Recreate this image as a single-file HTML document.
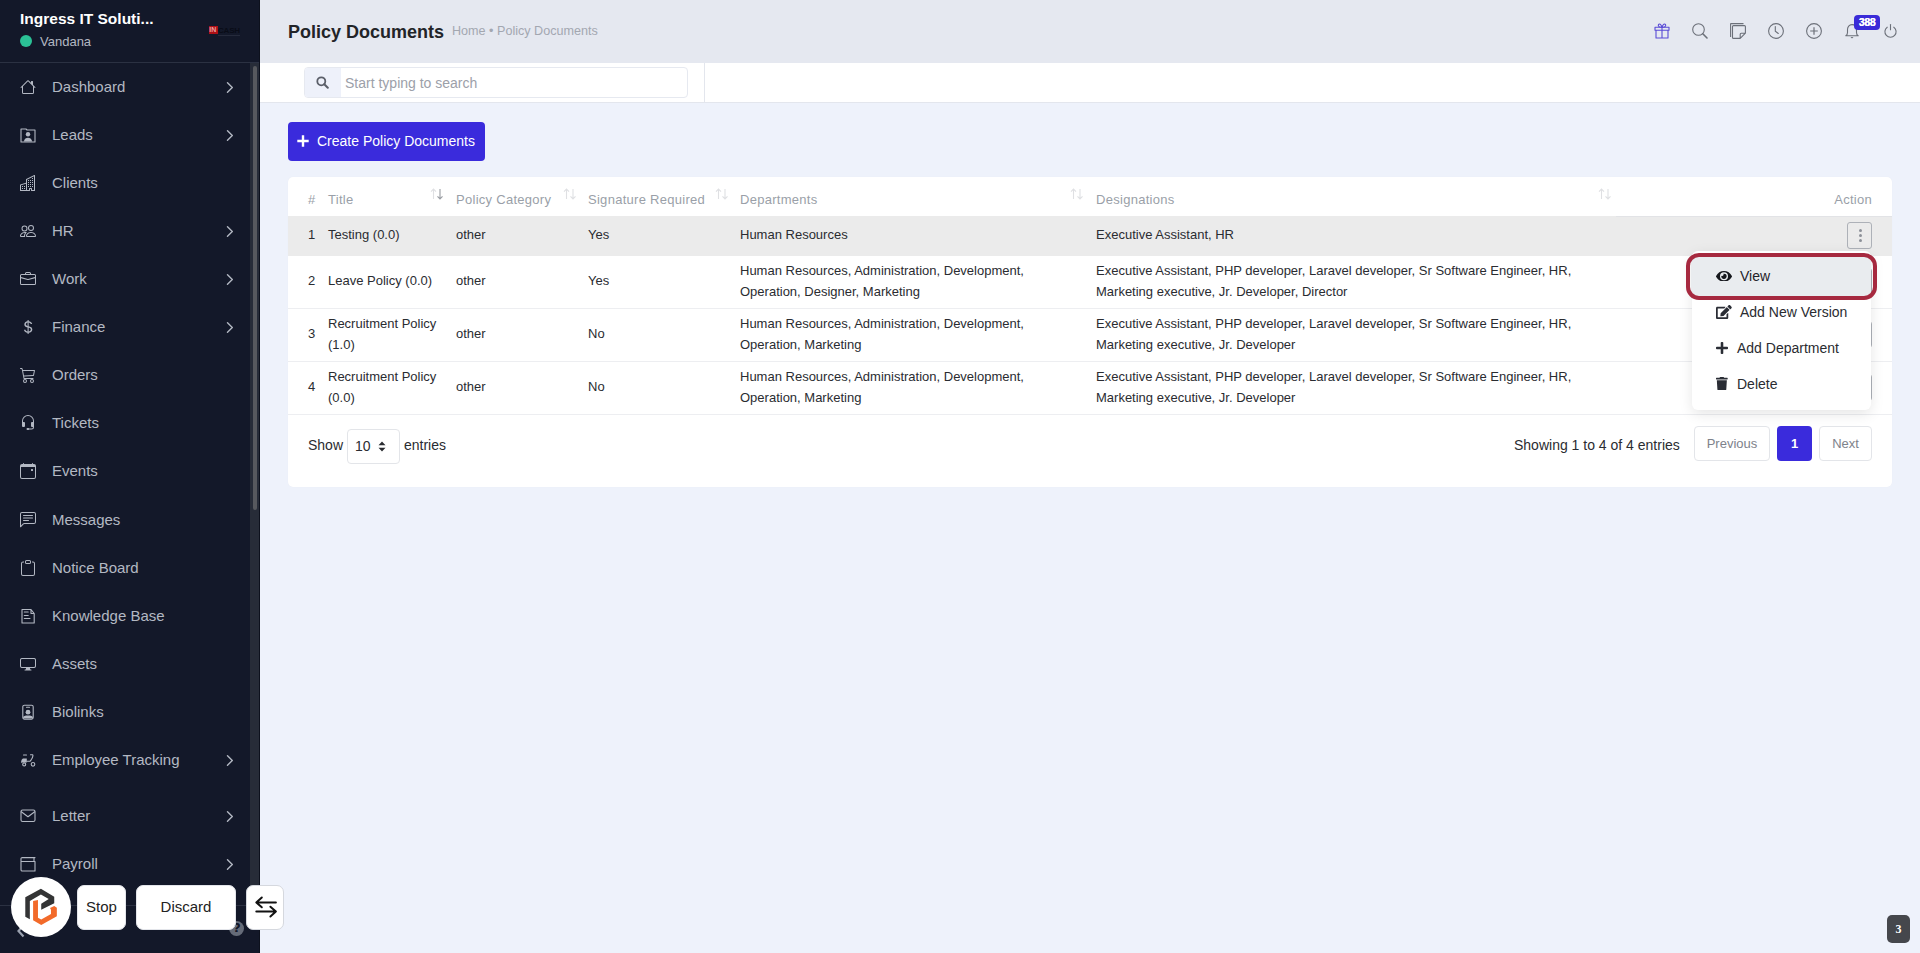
<!DOCTYPE html>
<html><head><meta charset="utf-8">
<style>
*{box-sizing:border-box;margin:0;padding:0}
html,body{width:1920px;height:953px;overflow:hidden;font-family:"Liberation Sans",sans-serif;background:#EEF2FB;position:relative}
.a{position:absolute;white-space:nowrap}
#sb{position:absolute;left:0;top:0;width:260px;height:953px;background:#131829;border-right:1px solid #0D111D}
#sbh{position:absolute;left:0;top:0;width:259px;height:63px;border-bottom:1px solid #2B3142}
.co{position:absolute;left:20px;top:9px;color:#fff;font-weight:bold;font-size:15.5px;line-height:20px;white-space:nowrap}
.usr{position:absolute;left:40px;top:33px;color:#B3B8C3;font-size:13px;line-height:18px}
.dot{position:absolute;left:20px;top:34.5px;width:12px;height:12px;border-radius:50%;background:#2BC196}
.nav{position:absolute;left:0;width:250px;height:40px}
.nav .ic{position:absolute;left:20px;top:12px;width:16px;height:16px;overflow:visible}
.nav .t{position:absolute;left:52px;top:10px;font-size:15px;line-height:20px;color:#B3B8C3;white-space:nowrap}
.nav .ch{position:absolute;left:226px;top:14.5px}
#scr{position:absolute;left:250px;top:63px;width:9px;height:842px;background:#272C38}
#thumb{position:absolute;left:253px;top:66px;width:4px;height:444px;background:#57595E;border-radius:2px}
#sbf{position:absolute;left:0;top:905px;width:259px;height:1px;background:#2B3142}
#hdr{position:absolute;left:260px;top:0;width:1660px;height:63px;background:#E5E8F0}
#srow{position:absolute;left:260px;top:63px;width:1660px;height:40px;background:#fff;border-bottom:1px solid #E3E6ED}
.h1{position:absolute;left:288px;top:21px;font-size:18px;line-height:22px;font-weight:bold;color:#222428;white-space:nowrap}
.bc{position:absolute;left:452px;top:23px;font-size:12.6px;line-height:16px;color:#A3A7B0;white-space:nowrap}
.hic{position:absolute;top:22px;width:17px;height:17px}
.badge{position:absolute;left:1854px;top:15px;width:26px;height:15px;border-radius:4px;background:#3A2BD8;color:#fff;font-size:10.5px;font-weight:bold;line-height:15px;text-align:center;letter-spacing:-0.3px;text-shadow:0.35px 0 0 #fff}
.sbox{position:absolute;left:304px;top:67px;width:384px;height:31px;border:1px solid #E6E9F0;border-radius:4px;background:#fff;overflow:hidden}
.sico{position:absolute;left:0;top:0;width:36px;height:29px;background:#EEF1FA}
.sph{position:absolute;left:40px;top:7px;font-size:14px;line-height:16px;color:#9CA0A9;white-space:nowrap}
#vdiv{position:absolute;left:704px;top:63px;width:1px;height:39px;background:#E3E6ED}
.btn{position:absolute;left:288px;top:122px;width:197px;height:39px;background:#3A2BDC;border-radius:4px;color:#fff}
.btn .t{position:absolute;left:29px;top:11px;font-size:14px;line-height:17px;white-space:nowrap}
.card{position:absolute;left:288px;top:177px;width:1604px;height:310px;background:#fff;border-radius:5px;box-shadow:0 0 1px rgba(0,0,0,.05)}
.th{position:absolute;top:15px;font-size:13px;line-height:16px;color:#9A9FA8;white-space:nowrap;letter-spacing:0.28px}
.td{position:absolute;font-size:13px;line-height:21px;color:#2A2C31;white-space:nowrap}
.row1{position:absolute;left:0;top:39px;width:1604px;height:40px;background:#EBEBEB}
.rb{position:absolute;left:0;width:1604px;height:1px;background:#EDEEF1}
.sort{position:absolute;top:12px;width:14px;height:14px}
</style></head><body>
<div id="sb">
  <div id="sbh">
    <div class="co">Ingress IT Soluti...</div>
    <div class="dot"></div>
    <div class="usr">Vandana</div>
    <div class="a" style="left:208.5px;top:25.7px;width:9px;height:8.3px;background:#AD1016"></div>
    <div class="a" style="left:209.3px;top:26px;font-size:7px;line-height:8px;font-weight:bold;color:#E9A0A0">IN</div>
    <div class="a" style="left:218px;top:26.5px;font-size:8px;line-height:8px;font-weight:bold;color:#090C17;letter-spacing:-0.2px">CASH</div>
    <div class="a" style="left:218px;top:34.5px;width:22px;height:1.2px;background:#252A3B"></div>
  </div>
<div class="nav" style="top:66.5px"><svg class="ic" viewBox="0 0 16 16" width="16" height="16"><path fill="#B3B8C3" d="M8.707 1.5a1 1 0 0 0-1.414 0L.646 8.146a.5.5 0 0 0 .708.708L2 8.207V13.5A1.5 1.5 0 0 0 3.5 15h9a1.5 1.5 0 0 0 1.5-1.5V8.207l.646.647a.5.5 0 0 0 .708-.708L13 5.793V2.5a.5.5 0 0 0-.5-.5h-1a.5.5 0 0 0-.5.5v1.293L8.707 1.5ZM13 7.207V13.5a.5.5 0 0 1-.5.5h-9a.5.5 0 0 1-.5-.5V7.207l5-5 5 5Z"/></svg><div class="t">Dashboard</div><svg class="ch" viewBox="0 0 8 12" width="8" height="12"><path d="M1.5 1.8 L6.3 6.5 L1.5 11.2" fill="none" stroke="#B3B8C3" stroke-width="1.4" stroke-linecap="round" stroke-linejoin="round"/></svg></div>
<div class="nav" style="top:114.5px"><svg class="ic" viewBox="0 0 16 16" width="16" height="16"><path fill="none" stroke="#B3B8C3" stroke-width="1.1" stroke-linecap="round" stroke-linejoin="round" d="M1 2 H6 L7 3 H15 V15 H1 Z"/><circle cx="8" cy="7.3" r="2.2" fill="#B3B8C3"/><path fill="#B3B8C3" d="M3.8 14.6 C4.5 11.5 6 10.8 8 10.8 C10 10.8 11.5 11.5 12.2 14.6 Z"/></svg><div class="t">Leads</div><svg class="ch" viewBox="0 0 8 12" width="8" height="12"><path d="M1.5 1.8 L6.3 6.5 L1.5 11.2" fill="none" stroke="#B3B8C3" stroke-width="1.4" stroke-linecap="round" stroke-linejoin="round"/></svg></div>
<div class="nav" style="top:162.5px"><svg class="ic" viewBox="0 0 16 16" width="16" height="16"><path fill="#B3B8C3" d="M14.763.075A.5.5 0 0 1 15 .5v15a.5.5 0 0 1-.5.5h-3a.5.5 0 0 1-.5-.5V14h-1v1.5a.5.5 0 0 1-.5.5h-9a.5.5 0 0 1-.5-.5V10a.5.5 0 0 1 .342-.474L6 7.64V4.5a.5.5 0 0 1 .276-.447l8-4a.5.5 0 0 1 .487.022ZM6 8.694 1 10.36V15h5V8.694ZM7 15h2v-1.5a.5.5 0 0 1 .5-.5h2a.5.5 0 0 1 .5.5V15h2V1.309l-7 3.5V15Z M2 11h1v1H2v-1Zm2 0h1v1H4v-1Zm-2 2h1v1H2v-1Zm2 0h1v1H4v-1Zm4-4h1v1H8V9Zm2 0h1v1h-1V9Zm-2 2h1v1H8v-1Zm2 0h1v1h-1v-1Zm2-2h1v1h-1V9Zm0 2h1v1h-1v-1ZM8 7h1v1H8V7Zm2 0h1v1h-1V7Zm2 0h1v1h-1V7ZM8 5h1v1H8V5Zm2 0h1v1h-1V5Zm2 0h1v1h-1V5Zm0-2h1v1h-1V3Z"/></svg><div class="t">Clients</div></div>
<div class="nav" style="top:210.5px"><svg class="ic" viewBox="0 0 16 16" width="16" height="16"><path fill="#B3B8C3" d="M15 14s1 0 1-1-1-4-5-4-5 3-5 4 1 1 1 1h8Zm-7.978-1A.261.261 0 0 1 7 12.996c.001-.264.167-1.03.76-1.72C8.312 10.629 9.282 10 11 10c1.717 0 2.687.63 3.240 1.276.593.69.758 1.457.76 1.72l-.008.002a.274.274 0 0 1-.014.002H7.022ZM11 7a2 2 0 1 0 0-4 2 2 0 0 0 0 4Zm3-2a3 3 0 1 1-6 0 3 3 0 0 1 6 0ZM6.936 9.28a5.88 5.88 0 0 0-1.23-.247A7.35 7.35 0 0 0 5 9c-4 0-5 3-5 4 0 .667.333 1 1 1h4.216A2.238 2.238 0 0 1 5 13c0-1.01.377-2.042 1.090-2.904.243-.294.526-.569.846-.816ZM4.92 10A5.493 5.493 0 0 0 4 13H1c0-.26.164-1.03.76-1.724.545-.636 1.492-1.256 3.160-1.275ZM1.5 5.5a3 3 0 1 1 6 0 3 3 0 0 1-6 0Zm3-2a2 2 0 1 0 0 4 2 2 0 0 0 0-4Z"/></svg><div class="t">HR</div><svg class="ch" viewBox="0 0 8 12" width="8" height="12"><path d="M1.5 1.8 L6.3 6.5 L1.5 11.2" fill="none" stroke="#B3B8C3" stroke-width="1.4" stroke-linecap="round" stroke-linejoin="round"/></svg></div>
<div class="nav" style="top:258.5px"><svg class="ic" viewBox="0 0 16 16" width="16" height="16"><path fill="#B3B8C3" d="M6.5 1A1.5 1.5 0 0 0 5 2.5V3H1.5A1.5 1.5 0 0 0 0 4.5v8A1.5 1.5 0 0 0 1.5 14h13a1.5 1.5 0 0 0 1.5-1.5v-8A1.5 1.5 0 0 0 14.5 3H11v-.5A1.5 1.5 0 0 0 9.5 1h-3zm0 1h3a.5.5 0 0 1 .5.5V3H6v-.5a.5.5 0 0 1 .5-.5zm1.886 6.914L15 7.151V12.5a.5.5 0 0 1-.5.5h-13a.5.5 0 0 1-.5-.5V7.15l6.614 1.764a1.5 1.5 0 0 0 .772 0zM1.5 4h13a.5.5 0 0 1 .5.5v1.616L8.129 7.948a.5.5 0 0 1-.258 0L1 6.116V4.5a.5.5 0 0 1 .5-.5z"/></svg><div class="t">Work</div><svg class="ch" viewBox="0 0 8 12" width="8" height="12"><path d="M1.5 1.8 L6.3 6.5 L1.5 11.2" fill="none" stroke="#B3B8C3" stroke-width="1.4" stroke-linecap="round" stroke-linejoin="round"/></svg></div>
<div class="nav" style="top:306.5px"><svg class="ic" viewBox="0 0 16 16" width="16" height="16"><path fill="#B3B8C3" d="M4 10.781c.148 1.667 1.513 2.85 3.591 3.003V15h1.043v-1.216c2.27-.179 3.678-1.438 3.678-3.3 0-1.59-.947-2.51-2.956-3.028l-.722-.187V3.467c1.122.11 1.879.714 2.07 1.616h1.47c-.166-1.6-1.54-2.748-3.54-2.875V1H7.591v1.233c-1.939.23-3.27 1.472-3.27 3.156 0 1.454.966 2.483 2.661 2.917l.61.162v4.031c-1.149-.17-1.94-.8-2.131-1.718H4zm3.391-3.836c-1.043-.263-1.6-.825-1.6-1.616 0-.944.704-1.641 1.8-1.828v3.495l-.2-.05zm1.591 1.872c1.287.323 1.852.859 1.852 1.769 0 1.097-.826 1.828-2.2 1.939V8.73l.348.086z"/></svg><div class="t">Finance</div><svg class="ch" viewBox="0 0 8 12" width="8" height="12"><path d="M1.5 1.8 L6.3 6.5 L1.5 11.2" fill="none" stroke="#B3B8C3" stroke-width="1.4" stroke-linecap="round" stroke-linejoin="round"/></svg></div>
<div class="nav" style="top:354.5px"><svg class="ic" viewBox="0 0 16 16" width="16" height="16"><path fill="#B3B8C3" d="M0 1.5A.5.5 0 0 1 .5 1H2a.5.5 0 0 1 .485.379L2.89 3H14.5a.5.5 0 0 1 .49.598l-1 5a.5.5 0 0 1-.465.401l-9.397.472L4.415 11H13a.5.5 0 0 1 0 1H4a.5.5 0 0 1-.491-.408L2.010 3.607 1.610 2H.5a.5.5 0 0 1-.5-.5zM3.102 4l.84 4.479 9.144-.459L13.890 4H3.102zM5 12a2 2 0 1 0 0 4 2 2 0 0 0 0-4zm7 0a2 2 0 1 0 0 4 2 2 0 0 0 0-4zm-7 1a1 1 0 1 1 0 2 1 1 0 0 1 0-2zm7 0a1 1 0 1 1 0 2 1 1 0 0 1 0-2z"/></svg><div class="t">Orders</div></div>
<div class="nav" style="top:402.5px"><svg class="ic" viewBox="0 0 16 16" width="16" height="16"><path fill="#B3B8C3" d="M8 1a5 5 0 0 0-5 5v1h1a1 1 0 0 1 1 1v3a1 1 0 0 1-1 1H3a1 1 0 0 1-1-1V6a6 6 0 1 1 12 0v6a2.5 2.5 0 0 1-2.5 2.5H9.366a1 1 0 0 1-.866.5h-1a1 1 0 1 1 0-2h1a1 1 0 0 1 .866.5H11.5A1.5 1.5 0 0 0 13 12h-1a1 1 0 0 1-1-1V8a1 1 0 0 1 1-1h1V6a5 5 0 0 0-5-5z"/></svg><div class="t">Tickets</div></div>
<div class="nav" style="top:450.5px"><svg class="ic" viewBox="0 0 16 16" width="16" height="16"><path fill="#B3B8C3" d="M11 6.5a.5.5 0 0 1 .5-.5h1a.5.5 0 0 1 .5.5v1a.5.5 0 0 1-.5.5h-1a.5.5 0 0 1-.5-.5v-1z M3.5 0a.5.5 0 0 1 .5.5V1h8V.5a.5.5 0 0 1 1 0V1h1a2 2 0 0 1 2 2v11a2 2 0 0 1-2 2H2a2 2 0 0 1-2-2V3a2 2 0 0 1 2-2h1V.5a.5.5 0 0 1 .5-.5zM1 4v10a1 1 0 0 0 1 1h12a1 1 0 0 0 1-1V4H1z"/></svg><div class="t">Events</div></div>
<div class="nav" style="top:499.5px"><svg class="ic" viewBox="0 0 16 16" width="16" height="16"><path fill="#B3B8C3" d="M14 1a1 1 0 0 1 1 1v8a1 1 0 0 1-1 1H4.414A2 2 0 0 0 3 11.586l-2 2V2a1 1 0 0 1 1-1h12zM2 0a2 2 0 0 0-2 2v12.793a.5.5 0 0 0 .854.353l2.853-2.853A1 1 0 0 1 4.414 12H14a2 2 0 0 0 2-2V2a2 2 0 0 0-2-2H2z M3 3.5a.5.5 0 0 1 .5-.5h9a.5.5 0 0 1 0 1h-9a.5.5 0 0 1-.5-.5zM3 6a.5.5 0 0 1 .5-.5h9a.5.5 0 0 1 0 1h-9A.5.5 0 0 1 3 6zm0 2.5a.5.5 0 0 1 .5-.5h5a.5.5 0 0 1 0 1h-5a.5.5 0 0 1-.5-.5z"/></svg><div class="t">Messages</div></div>
<div class="nav" style="top:547.5px"><svg class="ic" viewBox="0 0 16 16" width="16" height="16"><path fill="#B3B8C3" d="M4 1.5H3a2 2 0 0 0-2 2V14a2 2 0 0 0 2 2h10a2 2 0 0 0 2-2V3.5a2 2 0 0 0-2-2h-1v1h1a1 1 0 0 1 1 1V14a1 1 0 0 1-1 1H3a1 1 0 0 1-1-1V3.5a1 1 0 0 1 1-1h1v-1z M9.5 1a.5.5 0 0 1 .5.5v1a.5.5 0 0 1-.5.5h-3a.5.5 0 0 1-.5-.5v-1a.5.5 0 0 1 .5-.5h3zm-3-1A1.5 1.5 0 0 0 5 1.5v1A1.5 1.5 0 0 0 6.5 4h3A1.5 1.5 0 0 0 11 2.5v-1A1.5 1.5 0 0 0 9.5 0h-3z"/></svg><div class="t">Notice Board</div></div>
<div class="nav" style="top:595.5px"><svg class="ic" viewBox="0 0 16 16" width="16" height="16"><path fill="none" stroke="#B3B8C3" stroke-width="1.1" stroke-linecap="round" stroke-linejoin="round" d="M2 1.5 H11 L14.2 5.5 V15 H2 Z M11 1.5 V5.5 H14.2"/><path fill="none" stroke="#B3B8C3" stroke-width="1.1" stroke-linecap="round" stroke-linejoin="round" d="M4.3 4 H8.2 M4.3 7.5 H8.2 M4.3 10.5 H10"/></svg><div class="t">Knowledge Base</div></div>
<div class="nav" style="top:643.5px"><svg class="ic" viewBox="0 0 16 16" width="16" height="16"><path fill="#B3B8C3" d="M0 4s0-2 2-2h12s2 0 2 2v6s0 2-2 2h-4c0 .667.083 1.167.25 1.5H11a.5.5 0 0 1 0 1H5a.5.5 0 0 1 0-1h.75c.167-.333.25-.833.25-1.5H2s-2 0-2-2V4zm1.398-.855a.758.758 0 0 0-.254.302A1.46 1.46 0 0 0 1 4.010V10c0 .325.078.502.145.602.07.105.17.188.302.254a1.464 1.464 0 0 0 .538.143L2.010 11H14c.325 0 .502-.078.602-.145a.758.758 0 0 0 .254-.302 1.464 1.464 0 0 0 .143-.538L15 9.990V4c0-.325-.078-.502-.145-.602a.757.757 0 0 0-.302-.254A1.46 1.46 0 0 0 13.990 3H2c-.325 0-.502.078-.602.145z"/></svg><div class="t">Assets</div></div>
<div class="nav" style="top:691.5px"><svg class="ic" viewBox="0 0 16 16" width="16" height="16"><rect x="2.8" y="1.2" width="10.4" height="14" rx="1.6" fill="none" stroke="#B3B8C3" stroke-width="1.1" stroke-linecap="round" stroke-linejoin="round"/><path fill="none" stroke="#B3B8C3" stroke-width="1.1" stroke-linecap="round" stroke-linejoin="round" d="M6.5 3.2 H9.5"/><circle cx="8" cy="8.2" r="2.4" fill="#B3B8C3"/><path fill="#B3B8C3" d="M3.2 14.4 V13.2 C3.2 12 5 11.5 8 11.5 C11 11.5 12.8 12 12.8 13.2 V14.4 Z"/></svg><div class="t">Biolinks</div></div>
<div class="nav" style="top:739.5px"><svg class="ic" viewBox="0 0 16 16" width="16" height="16"><path fill="none" stroke="#B3B8C3" stroke-width="1.1" stroke-linecap="round" stroke-linejoin="round" d="M3.5 3 H6.5 M10.5 2.8 H12.6 C13.2 2.8 13 5 11.5 7.3 L10 9.3 H7"/><path fill="#B3B8C3" d="M1 11 C1 8.5 2.2 6.7 3 6.6 H6.8 V10.4 H2 Z"/><circle cx="4.2" cy="12.4" r="1.5" fill="none" stroke="#B3B8C3" stroke-width="1.1" stroke-linecap="round" stroke-linejoin="round"/><circle cx="13" cy="12.3" r="1.8" fill="none" stroke="#B3B8C3" stroke-width="1.1" stroke-linecap="round" stroke-linejoin="round"/></svg><div class="t">Employee Tracking</div><svg class="ch" viewBox="0 0 8 12" width="8" height="12"><path d="M1.5 1.8 L6.3 6.5 L1.5 11.2" fill="none" stroke="#B3B8C3" stroke-width="1.4" stroke-linecap="round" stroke-linejoin="round"/></svg></div>
<div class="nav" style="top:795.5px"><svg class="ic" viewBox="0 0 16 16" width="16" height="16"><rect x="1" y="2" width="14" height="11.5" rx="1.6" fill="none" stroke="#B3B8C3" stroke-width="1.1" stroke-linecap="round" stroke-linejoin="round"/><path fill="none" stroke="#B3B8C3" stroke-width="1.1" stroke-linecap="round" stroke-linejoin="round" d="M1.3 3.8 L8 8.8 L14.7 3.8"/></svg><div class="t">Letter</div><svg class="ch" viewBox="0 0 8 12" width="8" height="12"><path d="M1.5 1.8 L6.3 6.5 L1.5 11.2" fill="none" stroke="#B3B8C3" stroke-width="1.4" stroke-linecap="round" stroke-linejoin="round"/></svg></div>
<div class="nav" style="top:843.5px"><svg class="ic" viewBox="0 0 16 16" width="16" height="16"><path fill="none" stroke="#B3B8C3" stroke-width="1.1" stroke-linecap="round" stroke-linejoin="round" d="M2.3 1.6 H15 M1 5.5 H15 V15 H2.2 A1.2 1.2 0 0 1 1 13.8 V2.8 A1.2 1.2 0 0 1 2.3 1.6 M14 1.6 V5.5"/></svg><div class="t">Payroll</div><svg class="ch" viewBox="0 0 8 12" width="8" height="12"><path d="M1.5 1.8 L6.3 6.5 L1.5 11.2" fill="none" stroke="#B3B8C3" stroke-width="1.4" stroke-linecap="round" stroke-linejoin="round"/></svg></div>
  <div id="scr"></div><div id="thumb"></div>
  <div id="sbf"></div>
</div>
<div id="hdr">
</div>
<div class="h1">Policy Documents</div>
<div class="bc">Home &bull; Policy Documents</div>

<svg class="a" style="left:1654px;top:23px" width="16" height="16" viewBox="0 0 16 16"><path d="M1 4.3 H15 V7.2 H1 Z M2 7.2 V15 H14 V7.2 M8 4.3 V15" fill="none" stroke="#5A4BD6" stroke-width="1.1" stroke-linejoin="round"/><path d="M8 4.3 C7.4 2.5 6.8 1 5.6 1 C4.4 1 4 2.3 4.6 3.2 C5 3.8 5.8 4.3 8 4.3 C10.2 4.3 11 3.8 11.4 3.2 C12 2.3 11.6 1 10.4 1 C9.2 1 8.6 2.5 8 4.3" fill="none" stroke="#5A4BD6" stroke-width="1.1"/></svg>
<svg class="a" style="left:1692px;top:23px" width="16" height="16" viewBox="0 0 16 16"><circle cx="6.5" cy="6.5" r="5.8" fill="none" stroke="#6C7079" stroke-width="1.1"/><path d="M10.8 10.8 L15 15" stroke="#6C7079" stroke-width="1.6" stroke-linecap="round"/></svg>
<svg class="a" style="left:1730px;top:23px" width="16" height="16" viewBox="0 0 16 16"><path d="M0.6 14 V1 A0.4 0.4 0 0 1 1 0.6 H13.5" fill="none" stroke="#6C7079" stroke-width="1.1"/><path d="M2.5 3.6 A1 1 0 0 1 3.5 2.6 H14.4 A1 1 0 0 1 15.4 3.6 V10.2 L10.2 15.4 H3.5 A1 1 0 0 1 2.5 14.4 Z M15.4 10.2 H11.2 A1 1 0 0 0 10.2 11.2 V15.4" fill="none" stroke="#6C7079" stroke-width="1.1" stroke-linejoin="round"/></svg>
<svg class="a" style="left:1768px;top:23px" width="16" height="16" viewBox="0 0 16 16"><circle cx="8" cy="8" r="7.4" fill="none" stroke="#6C7079" stroke-width="1.1"/><path d="M7.3 3.5 V8.3 L10.3 10.5" fill="none" stroke="#6C7079" stroke-width="1.1" stroke-linecap="round"/></svg>
<svg class="a" style="left:1806px;top:23px" width="16" height="16" viewBox="0 0 16 16"><circle cx="8" cy="8" r="7.4" fill="none" stroke="#6C7079" stroke-width="1.1"/><path d="M8 4.2 V11.8 M4.2 8 H11.8" stroke="#6C7079" stroke-width="1.2"/></svg>
<svg class="a" style="left:1845px;top:23px" width="14" height="16" viewBox="0 0 14 16"><path d="M7 1.6 C4.2 1.6 2.5 3.8 2.5 6.5 V9.5 C2.5 11 1.8 12.3 0.8 12.8 H13.2 C12.2 12.3 11.5 11 11.5 9.5 V6.5 C11.5 3.8 9.8 1.6 7 1.6 Z" fill="none" stroke="#6C7079" stroke-width="1.1" stroke-linejoin="round"/><path d="M5.5 14 H8.5 L7 15.5 Z" fill="#6C7079"/></svg>
<div class="badge">388</div>
<svg class="a" style="left:1884px;top:23px" width="13" height="16" viewBox="0 0 13 16"><path d="M6.5 1.5 V6.8" stroke="#6C7079" stroke-width="1.1" stroke-linecap="round"/><path d="M3.2 4.2 A5.6 5.6 0 1 0 9.8 4.2" fill="none" stroke="#6C7079" stroke-width="1.1" stroke-linecap="round"/></svg>

<div id="srow"></div>
<div id="vdiv"></div>
<div class="sbox"><div class="sico"><svg style="position:absolute;left:11px;top:8px" width="13" height="13" viewBox="0 0 13 13"><circle cx="5.3" cy="5.3" r="4" fill="none" stroke="#5B5F69" stroke-width="1.8"/><path d="M8.3 8.3 L11.8 11.8" stroke="#5B5F69" stroke-width="2" stroke-linecap="round"/></svg></div><div class="sph">Start typing to search</div></div>
<div class="btn"><svg style="position:absolute;left:9px;top:13px" width="12" height="12" viewBox="0 0 12 12"><path d="M6 0.3 V11.7 M0.3 6 H11.7" stroke="#fff" stroke-width="2.4"/></svg><div class="t">Create Policy Documents</div></div>
<div class="card">
<div class="row1"></div><div class="rb" style="top:131px"></div><div class="rb" style="top:184px"></div><div class="rb" style="top:237px"></div><div class="a" style="left:1328px;top:39px;width:276px;height:1px;background:#E2E3E6"></div><div class="th" style="left:20px">#</div><div class="th" style="left:40px">Title</div><div class="th" style="left:168px">Policy Category</div><div class="th" style="left:300px">Signature Required</div><div class="th" style="left:452px">Departments</div><div class="th" style="left:808px">Designations</div><div class="th" style="right:20px">Action</div><svg class="a" style="left:142px;top:11px" width="13" height="12" viewBox="0 0 13 12"><path d="M3.5 11 V1.2 M1 3.6 L3.5 1 L6 3.6" fill="none" stroke="#DFE0E3" stroke-width="1.1"/><path d="M10 1 V10.8 M7.5 8.4 L10 11 L12.5 8.4" fill="none" stroke="#9A9DA3" stroke-width="1.1"/></svg><svg class="a" style="left:275px;top:11px" width="13" height="12" viewBox="0 0 13 12"><path d="M3.5 11 V1.2 M1 3.6 L3.5 1 L6 3.6" fill="none" stroke="#DFE0E3" stroke-width="1.1"/><path d="M10 1 V10.8 M7.5 8.4 L10 11 L12.5 8.4" fill="none" stroke="#DFE0E3" stroke-width="1.1"/></svg><svg class="a" style="left:427px;top:11px" width="13" height="12" viewBox="0 0 13 12"><path d="M3.5 11 V1.2 M1 3.6 L3.5 1 L6 3.6" fill="none" stroke="#DFE0E3" stroke-width="1.1"/><path d="M10 1 V10.8 M7.5 8.4 L10 11 L12.5 8.4" fill="none" stroke="#DFE0E3" stroke-width="1.1"/></svg><svg class="a" style="left:782px;top:11px" width="13" height="12" viewBox="0 0 13 12"><path d="M3.5 11 V1.2 M1 3.6 L3.5 1 L6 3.6" fill="none" stroke="#DFE0E3" stroke-width="1.1"/><path d="M10 1 V10.8 M7.5 8.4 L10 11 L12.5 8.4" fill="none" stroke="#DFE0E3" stroke-width="1.1"/></svg><svg class="a" style="left:1310px;top:11px" width="13" height="12" viewBox="0 0 13 12"><path d="M3.5 11 V1.2 M1 3.6 L3.5 1 L6 3.6" fill="none" stroke="#DFE0E3" stroke-width="1.1"/><path d="M10 1 V10.8 M7.5 8.4 L10 11 L12.5 8.4" fill="none" stroke="#DFE0E3" stroke-width="1.1"/></svg><div class="td" style="left:20px;top:47px">1</div><div class="td" style="left:40px;top:47px">Testing (0.0)</div><div class="td" style="left:168px;top:47px">other</div><div class="td" style="left:300px;top:47px">Yes</div><div class="td" style="left:452px;top:47px">Human Resources</div><div class="td" style="left:808px;top:47px">Executive Assistant, HR</div><div class="td" style="left:20px;top:93px">2</div><div class="td" style="left:40px;top:93px">Leave Policy (0.0)</div><div class="td" style="left:168px;top:93px">other</div><div class="td" style="left:300px;top:93px">Yes</div><div class="td" style="left:452px;top:83px">Human Resources, Administration, Development,<br>Operation, Designer, Marketing</div><div class="td" style="left:808px;top:83px">Executive Assistant, PHP developer, Laravel developer, Sr Software Engineer, HR,<br>Marketing executive, Jr. Developer, Director</div><div class="td" style="left:20px;top:146px">3</div><div class="td" style="left:40px;top:136px">Recruitment Policy<br>(1.0)</div><div class="td" style="left:168px;top:146px">other</div><div class="td" style="left:300px;top:146px">No</div><div class="td" style="left:452px;top:136px">Human Resources, Administration, Development,<br>Operation, Marketing</div><div class="td" style="left:808px;top:136px">Executive Assistant, PHP developer, Laravel developer, Sr Software Engineer, HR,<br>Marketing executive, Jr. Developer</div><div class="td" style="left:20px;top:199px">4</div><div class="td" style="left:40px;top:189px">Recruitment Policy<br>(0.0)</div><div class="td" style="left:168px;top:199px">other</div><div class="td" style="left:300px;top:199px">No</div><div class="td" style="left:452px;top:189px">Human Resources, Administration, Development,<br>Operation, Marketing</div><div class="td" style="left:808px;top:189px">Executive Assistant, PHP developer, Laravel developer, Sr Software Engineer, HR,<br>Marketing executive, Jr. Developer</div><div class="a" style="left:1559px;top:45px;width:25px;height:27px;border:1px solid #ADB1B8;border-radius:3px"><div class="a" style="left:10.5px;top:6px;width:3px;height:3px;border-radius:50%;background:#8C9098"></div><div class="a" style="left:10.5px;top:11px;width:3px;height:3px;border-radius:50%;background:#8C9098"></div><div class="a" style="left:10.5px;top:16px;width:3px;height:3px;border-radius:50%;background:#8C9098"></div></div><div class="a" style="left:1559px;top:91px;width:25px;height:27px;border:1px solid #ADB1B8;border-radius:3px"></div><div class="a" style="left:1559px;top:144px;width:25px;height:27px;border:1px solid #ADB1B8;border-radius:3px"></div><div class="a" style="left:1559px;top:197px;width:25px;height:27px;border:1px solid #ADB1B8;border-radius:3px"></div><div class="a" style="left:20px;top:260px;font-size:14px;line-height:17px;color:#2A2C31">Show</div><div class="a" style="left:59px;top:252px;width:53px;height:35px;border:1px solid #E3E5E9;border-radius:4px;background:#fff"><div class="a" style="left:7px;top:8px;font-size:14px;line-height:17px;color:#2A2C31">10</div><svg class="a" style="left:30px;top:11px" width="8" height="11" viewBox="0 0 8 11"><path d="M4 0.5 L7.5 4.3 H0.5 Z M4 10.5 L7.5 6.7 H0.5 Z" fill="#2A2C31"/></svg></div><div class="a" style="left:116px;top:260px;font-size:14px;line-height:17px;color:#2A2C31">entries</div><div class="a" style="left:1226px;top:260px;font-size:14px;line-height:17px;color:#2A2C31">Showing 1 to 4 of 4 entries</div><div class="a" style="left:1406px;top:249px;width:76px;height:35px;border:1px solid #E3E5E9;border-radius:4px;background:#fff;font-size:13px;line-height:34px;color:#7E828B;text-align:center">Previous</div><div class="a" style="left:1489px;top:249px;width:35px;height:35px;border-radius:4px;background:#3A2BDC;font-size:13px;font-weight:bold;line-height:35px;color:#fff;text-align:center">1</div><div class="a" style="left:1531px;top:249px;width:53px;height:35px;border:1px solid #E3E5E9;border-radius:4px;background:#fff;font-size:13px;line-height:34px;color:#7E828B;text-align:center">Next</div></div>

<div class="a" style="left:1692px;top:251px;width:179px;height:159px;background:#fff;border-radius:6px;box-shadow:0 4px 14px rgba(0,0,0,.10)"></div>
<div class="a" style="left:1691px;top:257px;width:180px;height:39px;background:#E9ECEF"></div>
<div class="a" style="left:1686px;top:253px;width:191px;height:47px;border:4px solid #A6293F;border-radius:13px"></div>
<svg class="a" style="left:1716px;top:270.5px" width="16" height="10.7" viewBox="0 64 576 384"><path fill="#16181D" d="M572.52 241.4C518.29 135.59 410.93 64 288 64S57.68 135.64 3.48 241.41a32.35 32.35 0 0 0 0 29.19C57.71 376.41 165.07 448 288 448s230.32-71.64 284.52-177.41a32.35 32.35 0 0 0 0-29.19zM288 400a144 144 0 1 1 144-144 143.93 143.93 0 0 1-144 144zm0-240a95.310 95.310 0 0 0-25.31 3.79 47.85 47.850 0 0 1-66.9 66.9A95.78 95.78 0 1 0 288 160z"/></svg>
<div class="a" style="left:1740px;top:268px;font-size:14px;line-height:17px;color:#1F2229">View</div>
<svg class="a" style="left:1716px;top:305px" width="15.75" height="14" viewBox="0 0 576 512"><path fill="#2A2D35" d="M402.6 83.2l90.2 90.2c3.8 3.8 3.8 10 0 13.8L274.4 405.6l-92.8 10.3c-12.4 1.4-22.9-9.1-21.5-21.5l10.3-92.8L388.8 83.2c3.8-3.8 10-3.8 13.8 0zm162-22.9l-48.8-48.8c-15.2-15.2-39.9-15.2-55.2 0l-35.4 35.4c-3.8 3.8-3.8 10 0 13.8l90.2 90.2c3.8 3.8 10 3.8 13.8 0l35.4-35.4c15.2-15.3 15.2-40 0-55.2zM384 346.2V448H64V128h229.8c3.2 0 6.2-1.3 8.5-3.5l40-40c7.6-7.6 2.2-20.5-8.5-20.5H48C21.5 64 0 85.5 0 112v352c0 26.5 21.5 48 48 48h352c26.5 0 48-21.5 48-48V306.2c0-10.7-12.9-16-20.5-8.5l-40 40c-2.2 2.3-3.5 5.3-3.5 8.5z"/></svg>
<div class="a" style="left:1740px;top:304px;font-size:14px;line-height:17px;color:#2A2C31">Add New Version</div>
<svg class="a" style="left:1716px;top:341.5px" width="12" height="12" viewBox="0 32 448 448"><path fill="#2A2D35" d="M416 208H272V64c0-17.67-14.330-32-32-32h-32c-17.67 0-32 14.33-32 32v144H32c-17.67 0-32 14.33-32 32v32c0 17.67 14.33 32 32 32h144v144c0 17.67 14.33 32 32 32h32c17.67 0 32-14.33 32-32V304h144c17.67 0 32-14.33 32-32v-32c0-17.67-14.33-32-32-32z"/></svg>
<div class="a" style="left:1737px;top:340px;font-size:14px;line-height:17px;color:#2A2C31">Add Department</div>
<svg class="a" style="left:1716px;top:376.5px" width="11.7" height="13.4" viewBox="0 0 448 512"><path fill="#2A2D35" d="M432 32H312l-9.4-18.7A24 24 0 0 0 281.1 0H166.8a23.72 23.72 0 0 0-21.4 13.3L136 32H16A16 16 0 0 0 0 48v32a16 16 0 0 0 16 16h416a16 16 0 0 0 16-16V48a16 16 0 0 0-16-16zM53.2 467a48 48 0 0 0 47.9 45h245.8a48 48 0 0 0 47.9-45L416 128H32z"/></svg>
<div class="a" style="left:1737px;top:376px;font-size:14px;line-height:17px;color:#2A2C31">Delete</div>

<div class="a" style="left:1887px;top:915px;width:23px;height:28px;background:#45474C;border-radius:5px;color:#fff;font-family:'Liberation Serif',serif;font-weight:bold;font-size:12px;line-height:28px;text-align:center">3</div>

<svg class="a" style="left:16px;top:924px" width="10" height="14" viewBox="0 0 10 14"><path d="M7.5 1.5 L2.5 7 L7.5 12.5" fill="none" stroke="#9AA1AF" stroke-width="2.2"/></svg>
<div class="a" style="left:229px;top:921px;width:15px;height:15px;border-radius:50%;background:#656B78;color:#131829;font-weight:bold;font-size:12px;line-height:15px;text-align:center;text-shadow:0.4px 0 0 #131829">?</div>
<div class="a" style="left:11px;top:877px;width:60px;height:60px;border-radius:50%;background:#fff"></div>
<svg class="a" style="left:10px;top:876px" width="62" height="62" viewBox="0 0 953 953"><path d="M235,325 L475,195 L680,320 L680,420 L480,520 L480,425 L595,355 L475,285 L305,385 L305,665 L235,625 Z" fill="#333435"/><path d="M355,385 L430,370 L430,640 L480,668 L630,585 L630,520 L615,492 L680,460 L720,488 L720,620 L480,752 L355,682 Z" fill="#F26A2A"/></svg>
<div class="a" style="left:77px;top:885px;width:49px;height:45px;background:#fff;border-radius:7px;border:1px solid #E3E5EA;font-size:15px;line-height:42px;text-align:center;color:#222">Stop</div>
<div class="a" style="left:136px;top:885px;width:100px;height:45px;background:#fff;border-radius:7px;border:1px solid #E3E5EA;font-size:15px;line-height:42px;text-align:center;color:#222">Discard</div>
<div class="a" style="left:246px;top:885px;width:38px;height:45px;background:#fff;border-radius:7px;border:1px solid #D5D8DE"><svg class="a" style="left:0;top:0" width="38" height="45" viewBox="0 0 38 45"><path d="M9.3 16.4 H28.9 M14.8 11.5 L9.3 16.4 L14.8 21.3 M9.3 25.6 H28.9 M23.4 20.7 L28.9 25.6 L23.4 30.5" fill="none" stroke="#111" stroke-width="2" stroke-linecap="round" stroke-linejoin="round"/></svg></div>

</body></html>
